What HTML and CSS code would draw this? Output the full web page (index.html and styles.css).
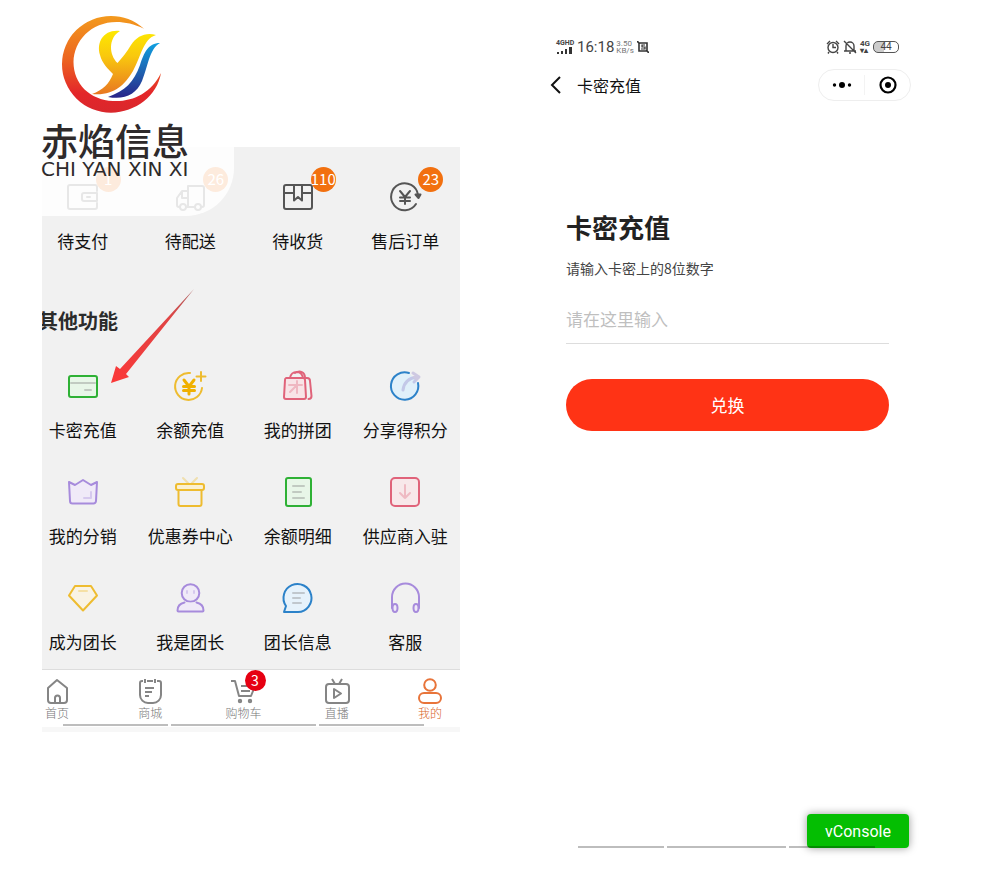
FILE: index.html
```html
<!doctype html>
<html lang="zh-CN">
  <head>
    <meta charset="utf-8">
    <meta name="viewport" content="width=device-width, initial-scale=1">
    <title>卡密充值</title>
    <link rel="stylesheet" href="styles.css">
  </head>
  <body>
    <main class="page">
      <section class="left">
        <div class="brand">
          <svg class="emblem" viewBox="60 14 104 100" fill="none">
            <defs>
              <linearGradient id="ring" x1="0" y1="0" x2="0" y2="1">
                <stop offset="0" stop-color="#f39a1d"/>
                <stop offset=".45" stop-color="#ec6420"/>
                <stop offset=".8" stop-color="#e3262a"/>
                <stop offset="1" stop-color="#d9272c"/>
              </linearGradient>
              <linearGradient id="gold" x1="0" y1="0" x2="0" y2="1">
                <stop offset="0" stop-color="#fde800"/>
                <stop offset=".4" stop-color="#f9c80e"/>
                <stop offset="1" stop-color="#e87722"/>
              </linearGradient>
              <linearGradient id="sea" x1="0" y1="0" x2="0" y2="1">
                <stop offset="0" stop-color="#0fa0e0"/>
                <stop offset=".55" stop-color="#1f5fae"/>
                <stop offset="1" stop-color="#2a2388"/>
              </linearGradient>
            </defs>
            <path fill="url(#ring)" d="M144 28.700C134 20 123 16 111 16A49 48 0 0 0 62 64A49 48.500 0 0 0 111 112.700C136 112 157 96 161 73C151 93 133 102 113 101C90 100 73.500 84 73.500 62C74 34 104 10 144 28.700Z"/>
            <path fill="url(#gold)" d="M120 31C104 29 96 42 100 55C102 63 108 69 113 74C109 84 103 90 92 94C113 96 124 86 133 71C141 57 143 39 156 35C146 32 137 36 131 45C127 52 122 58 117.500 63C109 55 108 38 120 31Z"/>
            <path fill="url(#sea)" d="M160 43C148 43 144 53 140 65C134 82 125 91 108 97C124 100 136 95 142 81C148 67 149 49 160 43Z"/>
          </svg>
          <div class="brand-name">赤焰信息</div>
          <div class="brand-latin">CHI YAN XIN XI</div>
        </div>

        <div class="mall">
          <div class="grid orders">
            <a class="item" href="#">
              <span class="icon">
                <svg viewBox="0 0 36 36" class="dark"><path d="M32 12V8a2 2 0 0 0-2-2H5a2 2 0 0 0-2 2v20a2 2 0 0 0 2 2h25a2 2 0 0 0 2-2v-4M32 14H19a2 2 0 0 0-2 2v4a2 2 0 0 0 2 2h13zM22 18h3"/></svg>
                <b class="badge">1</b>
              </span>
              待支付
            </a>
            <a class="item" href="#">
              <span class="icon">
                <svg viewBox="0 0 36 36" class="dark"><path d="M16 27V7h14a2 2 0 0 1 2 2v17a2 2 0 0 1-2 2h-1M16 12h-6l-5 7v7a2 2 0 0 0 2 2h1M14 28h9M10 13v6h6"/><circle cx="11" cy="28" r="3"/><circle cx="26" cy="28" r="3"/></svg>
                <b class="badge">26</b>
              </span>
              待配送
            </a>
            <a class="item" href="#">
              <span class="icon">
                <svg viewBox="0 0 36 36" class="dark"><rect x="4" y="6" width="28" height="24" rx="2"/><path d="M4 14h10M22 14h10M14 6v15.500l4-3.500 4 3.500V6"/></svg>
                <b class="badge">110</b>
              </span>
              待收货
            </a>
            <a class="item" href="#">
              <span class="icon">
                <svg viewBox="0 0 36 36" class="dark"><path d="M29 25A13.500 13.500 0 1 1 31 16"/><path d="M28.500 15.500h5L31.500 19z" fill="#555"/><path d="M13 12l5 6 5-6M13 18.500h10M13 22h10M18 18v7"/></svg>
                <b class="badge">23</b>
              </span>
              售后订单
            </a>
          </div>

          <h2>其他功能</h2>

          <div class="grid features">
            <a class="item" href="#">
              <span class="icon"><svg viewBox="0 0 36 36" class="green"><rect x="4" y="8" width="28" height="21" rx="2" fill="#e8f6e8"/><path class="soft grey" d="M6 15h24M20 22h6"/></svg></span>
              卡密充值
            </a>
            <a class="item" href="#">
              <span class="icon"><svg viewBox="0 0 36 36" class="gold"><path d="M18 5A13.500 13.500 0 1 0 30 20"/><path class="bold" d="M12 12l5 6.500 5-6.500M11.500 18.500h11M11.500 22.500h11M17 18v8"/><path d="M29 4v9M24.500 8.500h9"/></svg></span>
              余额充值
            </a>
            <a class="item" href="#">
              <span class="icon"><svg viewBox="0 0 36 36" class="red"><path d="M6 10h17a2 2 0 0 1 2 2l1 17a2 2 0 0 1-2 2H6a2 2 0 0 1-2-2l1-17a2 2 0 0 1 1-2z" fill="#f8e4e7"/><path d="M10 10c1-8 12-8 13 0M15 5c5-3 10-1 10 5h2a3 3 0 0 1 3 3l1.500 15c0 2-1 3-3 3"/><path class="soft" d="M9 17h13M17 13v12M17 17l-7 7"/></svg></span>
              我的拼团
            </a>
            <a class="item" href="#">
              <span class="icon"><svg viewBox="0 0 36 36" class="blue"><path d="M22 5A13.700 13.700 0 1 0 31 15" fill="#e0f0fa"/><path class="soft wide" d="M16 22c1-8 6-12 14-13M26 5l6 4-5 5"/></svg></span>
              分享得积分
            </a>
            <a class="item" href="#">
              <span class="icon"><svg viewBox="0 0 36 36" class="purple"><path d="M4 8l6 3 8-5 8 5 6-3-1 19a2.500 2.500 0 0 1-2.500 2.500h-21A2.500 2.500 0 0 1 5 27z" fill="#f0eaf8"/><path class="soft" d="M26 18v6h-7"/></svg></span>
              我的分销
            </a>
            <a class="item" href="#">
              <span class="icon"><svg viewBox="0 0 36 36" class="gold"><path class="soft" d="M11 4l5 5M25 4l-5 5"/><rect x="4" y="10" width="28" height="6" rx="2" fill="#fbf0d0"/><path d="M6.500 16v14a2 2 0 0 0 2 2h19a2 2 0 0 0 2-2V16"/></svg></span>
              优惠券中心
            </a>
            <a class="item" href="#">
              <span class="icon"><svg viewBox="0 0 36 36" class="green"><rect x="6" y="4" width="25" height="28" rx="2" fill="#e8f6e8"/><path class="soft grey" d="M13 12h11M13 18h8M13 24h11"/></svg></span>
              余额明细
            </a>
            <a class="item" href="#">
              <span class="icon"><svg viewBox="0 0 36 36" class="red"><rect x="4" y="4" width="28" height="28" rx="4" fill="#f8e8ea"/><path class="soft" d="M18 11v13M13 19l5 5 5-5"/></svg></span>
              供应商入驻
            </a>
            <a class="item" href="#">
              <span class="icon"><svg viewBox="0 0 36 36" class="gold"><path d="M10 6h16l6 9.500L18 30.500 4 15.500z" fill="#f9f3e4"/><path class="soft" d="M14 11h8"/></svg></span>
              成为团长
            </a>
            <a class="item" href="#">
              <span class="icon"><svg viewBox="0 0 36 36" class="purple"><circle cx="18.500" cy="13" r="8.800" fill="#f0eaf8"/><path d="M12.500 22.500C8 23.500 5.500 26 5.500 30.500a1 1 0 0 0 1 1h24a1 1 0 0 0 1-1c0-4.500-2.500-7-7-8" fill="#f0eaf8"/><path class="soft" d="M15 11v2M22 11v2"/></svg></span>
              我是团长
            </a>
            <a class="item" href="#">
              <span class="icon"><svg viewBox="0 0 36 36" class="blue"><path d="M4 32l2-6A14 14 0 1 1 18 32z" fill="#e6f2fb"/><path class="soft grey" d="M13 13h11M13 18h7M13 23h8"/></svg></span>
              团长信息
            </a>
            <a class="item" href="#">
              <span class="icon"><svg viewBox="0 0 36 36" class="purple"><path d="M5 28V17a13 13 0 0 1 27 0v11"/><ellipse cx="8" cy="28" rx="2.500" ry="4" fill="#f0eaf8"/><ellipse cx="29" cy="28" rx="2.500" ry="4" fill="#f0eaf8"/></svg></span>
              客服
            </a>
          </div>

          <svg class="pointer" viewBox="0 0 84 94">
            <defs>
              <linearGradient id="tail" x1="1" y1="0" x2="0" y2="1">
                <stop offset="0" stop-color="#a86060"/>
                <stop offset=".3" stop-color="#e04444"/>
                <stop offset="1" stop-color="#fb3838"/>
              </linearGradient>
            </defs>
            <path fill="url(#tail)" d="M83 0L15 85l3 3L0 94l5-17 4 3z"/>
          </svg>

          <nav class="tabs">
            <a class="tab" href="#"><svg viewBox="0 0 28 28"><path d="M5 11l9-8 10 8v12a3 3 0 0 1-3 3H8a3 3 0 0 1-3-3zM12 26v-5a2.500 2.500 0 0 1 5 0v5"/></svg>首页</a>
            <a class="tab" href="#"><svg viewBox="0 0 28 28"><path d="M11 4h6M7 4H6a2 2 0 0 0-2 2v12a8 8 0 0 0 8 8h5a8 8 0 0 0 8-8V6a2 2 0 0 0-2-2h-2M9 2v4M19 2v4M9 11h9M9 15h7M9 19h4"/></svg>商城</a>
            <a class="tab" href="#">
              <svg viewBox="0 0 28 28"><path d="M1 4h4l4 15h12l4-10H11M11 14h9"/><circle cx="10" cy="24" r="1.200"/><circle cx="20" cy="24" r="1.200"/></svg>
              <b class="count">3</b>购物车
            </a>
            <a class="tab" href="#"><svg viewBox="0 0 28 28"><rect x="3" y="7" width="23" height="19" rx="3"/><path d="M9 2l3 5M19 2l-3 5M11 12v9l7-4.500z"/></svg>直播</a>
            <a class="tab active" href="#"><svg viewBox="0 0 28 28"><circle cx="14" cy="8" r="5.800"/><rect x="3" y="16" width="22" height="10" rx="5"/></svg>我的</a>
          </nav>
          <div class="bars left-bars"><i></i><i></i><i></i></div>
        </div>
      </section>

      <section class="recharge">
        <div class="status">
          <span class="signal">
            <small>4GHD</small>
            <svg viewBox="0 0 17 7"><path d="M1 5h2v2H1zM5 4h2v3H5zM9 2h2v5H9zM13 0h3v7h-3z" fill="#333"/></svg>
          </span>
          <span class="clock">16:18</span>
          <span class="speed">3.50<br>KB/s</span>
          <svg class="nfc" viewBox="0 0 12 12"><path d="M2 2h8v8H2zM0 0l3 3M12 12l-3-3" fill="none" stroke="#333" stroke-width="1.600"/><path d="M8 4H5v2h3v2H4" fill="none" stroke="#333" stroke-width="1.200"/></svg>
          <span class="system">
            <svg viewBox="0 0 14 14"><path d="M7 4v3.500h3M1 4l3-3M13 4l-3-3M3 12l-1 1.500M11 12l1 1.500"/><circle cx="7" cy="7.500" r="5"/></svg>
            <svg viewBox="0 0 14 14"><path d="M3 11V6a4 4 0 0 1 8 0v5M1 11h12M6 13h2M1 1l12 12"/></svg>
            <span class="network">4G<br>▾▴</span>
            <span class="battery">44</span>
          </span>
        </div>

        <header class="bar">
          <a class="back" href="#" aria-label="返回"><svg viewBox="0 0 12 18"><path d="M10 1L2 9l8 8"/></svg></a>
          <span class="bar-title">卡密充值</span>
          <div class="capsule">
            <button type="button" aria-label="更多"><svg viewBox="0 0 20 20"><circle cx="2.500" cy="10" r="1.700"/><circle cx="10" cy="10" r="3"/><circle cx="17.500" cy="10" r="1.700"/></svg></button>
            <button type="button" aria-label="关闭"><svg viewBox="0 0 20 20"><circle cx="10" cy="10" r="7.500" fill="none" stroke="#000" stroke-width="2.200"/><circle cx="10" cy="10" r="3"/></svg></button>
          </div>
        </header>

        <form class="form">
          <h1>卡密充值</h1>
          <label for="code">请输入卡密上的8位数字</label>
          <input id="code" type="text" placeholder="请在这里输入">
          <button class="submit" type="button">兑换</button>
        </form>

        <footer class="bottom">
          <button class="console" type="button">vConsole</button>
          <div class="bars right-bars"><i></i><i></i><i></i></div>
        </footer>
      </section>
    </main>
  </body>
</html>
```

FILE: styles.css
```css
* {
  box-sizing: border-box;
}

body {
  margin: 0;
  background: #fff;
  color: #111;
  font-family: "Noto Sans CJK SC", "Noto Sans", sans-serif;
}

a {
  color: inherit;
  text-decoration: none;
}

button {
  border: 0;
  padding: 0;
  font-family: inherit;
  cursor: pointer;
}

svg {
  display: block;
}

.page {
  display: grid;
  grid-template-columns: 418fr 382fr;
  gap: 80px;
  padding: 0 82px 0 42px;
}

/* brand mark, fades out the top corner of the mall */
.brand {
  position: relative;
  z-index: 2;
  width: 192px;
  height: 216px;
  margin-bottom: -69px;
  padding-top: 14px;
  background: rgba(255, 255, 255, .86);
  border-radius: 0 0 48px 0;
  color: #2e2a2b;
  white-space: nowrap;
}

.emblem {
  width: 104px;
  height: 100px;
  margin-left: 18px;
}

.brand-name {
  margin-top: 8px;
  font-size: 37px;
  line-height: 36px;
  font-weight: 500;
}

.brand-latin {
  font-family: "DejaVu Sans", sans-serif;
  font-size: 20px;
  line-height: 22px;
}

.brand-name,
.brand-latin {
  margin-left: -1px;
}

/* mall */
.mall {
  position: relative;
  overflow: hidden;
  background: #f1f1f1;
}

.grid {
  display: grid;
  grid-template-columns: repeat(4, 1fr);
  row-gap: 32px;
  margin: 0 1px 0 -13px;
}

.orders {
  padding-top: 32px;
}

.features {
  padding-bottom: 15px;
}

.item {
  display: flex;
  flex-direction: column;
  align-items: center;
  gap: 14px;
  font-size: 17px;
  line-height: 24px;
  white-space: nowrap;
}

.icon {
  position: relative;
  width: 36px;
  height: 36px;
}

.icon svg {
  fill: none;
  stroke-width: 2;
  stroke-linecap: round;
  stroke-linejoin: round;
}

.dark { stroke: #555; }
.green { stroke: #2eb135; }
.gold { stroke: #eebc30; }
.red { stroke: #e0637a; }
.blue { stroke: #2c82c9; }
.purple { stroke: #a78bdc; }

.icon .soft {
  opacity: .35;
}

.icon .grey {
  stroke: #777;
}

.icon .bold {
  stroke: #f0b000;
  stroke-width: 3;
}

.icon .wide {
  stroke: #8b7fc7;
  stroke-width: 3;
}

.badge,
.count {
  position: absolute;
  border-radius: 50%;
  color: #fff;
  font-weight: 400;
  text-align: center;
}

.badge {
  top: -12px;
  left: 31px;
  width: 25px;
  height: 25px;
  background: #f2700f;
  font-size: 15px;
  line-height: 24px;
}

h2 {
  margin: 54px 0 33px -4px;
  color: #2b2b2b;
  font-size: 20px;
  line-height: 28px;
}

.pointer {
  position: absolute;
  top: 142px;
  left: 69px;
  width: 84px;
  height: 94px;
}

.tabs {
  display: flex;
  justify-content: space-between;
  height: 55px;
  padding: 7px 15px 0 0;
  border-top: 1px solid #ddd;
  background: #fff;
}

.tab {
  position: relative;
  display: flex;
  flex-direction: column;
  align-items: center;
  width: 30px;
  color: #777;
  font-size: 12px;
  font-weight: 300;
  line-height: 16px;
  white-space: nowrap;
}

.tab svg {
  width: 28px;
  height: 28px;
  flex: none;
  fill: none;
  stroke: #858585;
  stroke-width: 2;
  stroke-linejoin: round;
}

.tab.active {
  color: #d9652a;
}

.tab.active svg {
  stroke: #e8743a;
}

.count {
  top: -7px;
  left: 16px;
  width: 21px;
  height: 21px;
  background: #e60012;
  font-size: 14px;
  line-height: 20px;
}

.bars {
  display: flex;
  gap: 3px;
}

.bars i {
  height: 2px;
  background: rgba(0, 0, 0, .26);
}

.left-bars {
  height: 8px;
  padding: 0 36px 0 21px;
  background: linear-gradient(#fff 3px, #f7f7f7 3px);
}

.left-bars i {
  flex: 105;
}

.left-bars i:nth-child(2) {
  flex: 146;
}

/* recharge screen */
.recharge {
  padding-top: 37px;
}

.status {
  display: flex;
  align-items: center;
  height: 20px;
  padding: 0 23px 0 16px;
  color: #444;
  font-family: Roboto, sans-serif;
}

.signal {
  width: 17px;
}

.signal small {
  display: block;
  font-size: 7px;
  font-weight: 700;
  line-height: 7px;
}

.signal svg {
  width: 17px;
  height: 7px;
}

.clock {
  margin-left: 4px;
  font-size: 15px;
  line-height: 20px;
}

.speed {
  margin-left: 2px;
  color: #777;
  font-size: 8px;
  line-height: 7px;
}

.nfc {
  width: 12px;
  height: 12px;
  margin-left: 3px;
}

.system {
  display: flex;
  align-items: center;
  gap: 3px;
  margin-left: auto;
}

.system svg {
  width: 14px;
  height: 14px;
  fill: none;
  stroke: #444;
  stroke-width: 1.4;
}

.network {
  font-size: 8px;
  font-weight: 700;
  line-height: 7px;
}

.battery {
  width: 26px;
  height: 12px;
  border: 1px solid #555;
  border-radius: 5px;
  background: linear-gradient(90deg, #ccc 40%, #fff 40%);
  font-size: 10px;
  line-height: 10px;
  text-align: center;
}

.bar {
  display: flex;
  align-items: center;
  height: 32px;
  margin-top: 12px;
  padding: 0 11px 0 10px;
}

.back svg {
  width: 12px;
  height: 18px;
  fill: none;
  stroke: #111;
  stroke-width: 2;
}

.bar-title {
  margin-left: 15px;
  font-size: 16px;
  line-height: 24px;
}

.capsule {
  display: flex;
  align-items: center;
  width: 93px;
  height: 32px;
  margin-left: auto;
  border: 1px solid #eee;
  border-radius: 16px;
}

.capsule button {
  display: flex;
  flex: 1;
  justify-content: center;
  background: none;
}

.capsule button + button {
  border-left: 1px solid #f3f3f3;
}

.capsule svg {
  width: 20px;
  height: 20px;
}

.form {
  display: flex;
  flex-direction: column;
  padding: 108px 33px 0 26px;
}

h1 {
  margin: 0;
  color: #222;
  font-size: 26px;
  line-height: 36px;
}

label {
  margin-top: 13px;
  color: #444;
  font-size: 14px;
  line-height: 20px;
}

input {
  height: 46px;
  margin-top: 20px;
  padding: 0 0 5px;
  border: 0;
  border-bottom: 1px solid #ddd;
  outline: 0;
  font-family: inherit;
  font-size: 17px;
}

input::placeholder {
  color: #bfbfbf;
}

.submit {
  height: 52px;
  margin-top: 35px;
  padding-bottom: 2px;
  border-radius: 26px;
  background: #ff3315;
  color: #fff;
  font-size: 17px;
}

.bottom {
  position: relative;
  margin: 383px 13px 31px 38px;
  padding-top: 32px;
}

.console {
  position: absolute;
  right: 0;
  bottom: 0;
  width: 102px;
  height: 34px;
  border-radius: 4px;
  background: #04be02;
  box-shadow: 0 0 8px rgba(0, 0, 0, .4);
  color: #fff;
  font-family: Roboto, sans-serif;
  font-size: 16px;
}

.right-bars {
  position: relative;
  padding-right: 34px;
}

.right-bars i {
  flex: 87;
}

.right-bars i:nth-child(2) {
  flex: 121;
}
```
